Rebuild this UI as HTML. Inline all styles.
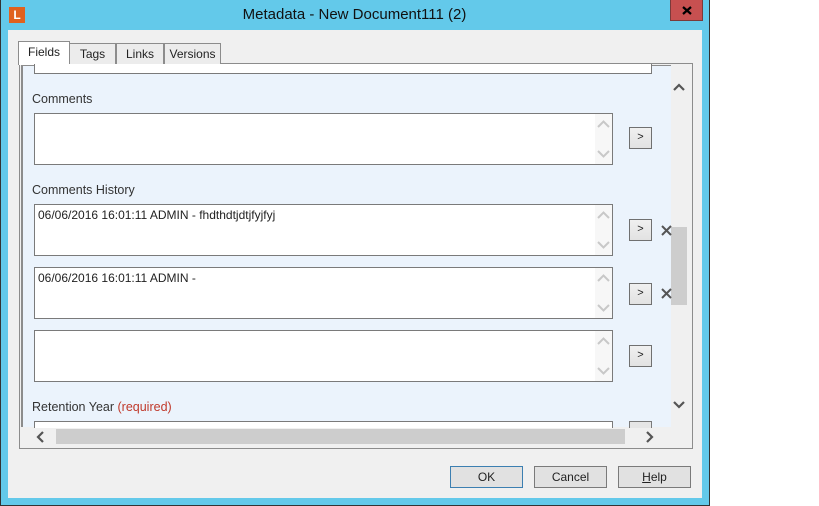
<!DOCTYPE html>
<html><head><style>
body{margin:0;width:819px;height:506px;background:#fff;font-family:"Liberation Sans",sans-serif;font-size:12px;color:#222;position:relative;overflow:hidden}
.a{position:absolute}
.win{left:0;top:0;width:708px;height:505px;background:#63c9ea;border:1px solid #333;border-top:none}
.ta{position:absolute;left:34px;width:577px;height:50px;background:#fff;border:1px solid #7a7a7a}
.ta .sb{position:absolute;right:0;top:0;width:17px;height:50px;background:#f7f7f7}
.btn{position:absolute;left:629px;width:21px;height:20px;background:linear-gradient(#f0f0f0,#e2e2e2);border:1px solid #707070;font-size:11px;text-align:center;line-height:19px}
.x{position:absolute;left:661px}
.lbl{position:absolute;left:32px;font-size:12.5px;color:#333}
.tab{position:absolute;top:43px;height:20px;border:1px solid #8c8c8c;background:#ececec;font-size:12px;line-height:20px;text-align:center}
.db{position:absolute;top:466px;width:71px;height:20px;border:1px solid #7a7a7a;background:#e1e1e1;text-align:center;line-height:20px;font-size:12px}
</style></head><body>
<div class="a win"></div>
<div class="a" style="left:9px;top:7px;width:16px;height:16px;background:#e0611e;color:#fff;font-weight:bold;font-size:12px;text-align:center;line-height:16px">L</div>
<div class="a" style="left:0;width:709px;top:6px;text-align:center;font-size:15px;color:#111">Metadata - New Document111 (2)</div>
<div class="a" style="left:670px;top:0;width:33px;height:21px;background:#c75050;border:1px solid #7b3a3a;border-top:none;box-sizing:border-box">
<svg class="a" style="left:11px;top:6px" width="10" height="9"><path d="M1 1L9 8M9 1L1 8" stroke="#000" stroke-width="2.2"/></svg></div>
<div class="a" style="left:8px;top:30px;width:694px;height:468px;background:#f0f0f0"></div>
<div class="a" style="left:19px;top:63px;width:672px;height:384px;border:1px solid #8c8c8c;background:#f0f0f0"></div>
<div class="tab" style="left:69px;width:45px">Tags</div>
<div class="tab" style="left:116px;width:46px">Links</div>
<div class="tab" style="left:164px;width:55px">Versions</div>
<div class="tab" style="left:18px;top:41px;width:50px;height:23px;background:#fff;border-bottom:none;line-height:20px">Fields</div>
<div class="a" style="left:21px;top:65px;width:650px;height:362px;background:#ebf3fc;border-left:2px solid #8c8c8c;border-top:1px solid #8c8c8c;box-sizing:border-box"></div>
<div class="a" style="left:671px;top:65px;width:17px;height:362px;background:#f0f0f0"></div>
<div class="a" style="left:671px;top:227px;width:16px;height:78px;background:#cdcdcd"></div>
<svg class="a" style="left:672px;top:82px" width="14" height="10"><path d="M2 8L7 3L12 8" stroke="#555" stroke-width="2.2" fill="none"/></svg>
<svg class="a" style="left:672px;top:400px" width="14" height="10"><path d="M2 2L7 7L12 2" stroke="#555" stroke-width="2.2" fill="none"/></svg>
<div class="a" style="left:34px;top:64px;width:616px;height:9px;background:#fff;border:1px solid #7a7a7a;border-top:none"></div>
<div class="lbl" style="top:92px">Comments</div>
<div class="ta" style="top:113px"><div class="sb"><svg width="17" height="50"><path d="M3 13L8.5 7.5L14 13M3 37L8.5 42.5L14 37" stroke="#c8c8c8" stroke-width="2" fill="none"/></svg></div></div>
<div class="btn" style="top:127px">&gt;</div>
<div class="lbl" style="top:183px">Comments History</div>
<div class="ta" style="top:204px"><div class="a" style="left:3px;top:3px">06/06/2016 16:01:11 ADMIN - fhdthdtjdtjfyjfyj</div><div class="sb"><svg width="17" height="50"><path d="M3 13L8.5 7.5L14 13M3 37L8.5 42.5L14 37" stroke="#c8c8c8" stroke-width="2" fill="none"/></svg></div></div>
<div class="btn" style="top:219px">&gt;</div>
<svg class="x" style="top:225px" width="11" height="11"><path d="M1 1L10 10M10 1L1 10" stroke="#555" stroke-width="2"/></svg>
<div class="ta" style="top:267px"><div class="a" style="left:3px;top:3px">06/06/2016 16:01:11 ADMIN -</div><div class="sb"><svg width="17" height="50"><path d="M3 13L8.5 7.5L14 13M3 37L8.5 42.5L14 37" stroke="#c8c8c8" stroke-width="2" fill="none"/></svg></div></div>
<div class="btn" style="top:283px">&gt;</div>
<svg class="x" style="top:288px" width="11" height="11"><path d="M1 1L10 10M10 1L1 10" stroke="#555" stroke-width="2"/></svg>
<div class="ta" style="top:330px"><div class="sb"><svg width="17" height="50"><path d="M3 13L8.5 7.5L14 13M3 37L8.5 42.5L14 37" stroke="#c8c8c8" stroke-width="2" fill="none"/></svg></div></div>
<div class="btn" style="top:345px">&gt;</div>
<div class="lbl" style="top:400px">Retention Year <span style="color:#c0392b">(required)</span></div>
<div class="a" style="left:34px;top:421px;width:577px;height:8px;background:#fff;border:1px solid #7a7a7a;border-bottom:none"></div>
<div class="a" style="left:629px;top:421px;width:21px;height:8px;background:#e6e6e6;border:1px solid #7a7a7a;border-bottom:none"></div>
<div class="a" style="left:22px;top:428px;width:649px;height:17px;background:#f0f0f0"></div>
<div class="a" style="left:56px;top:429px;width:569px;height:15px;background:#cdcdcd"></div>
<svg class="a" style="left:36px;top:431px" width="10" height="12"><path d="M7 1L2 6L7 11" stroke="#555" stroke-width="2.2" fill="none"/></svg>
<svg class="a" style="left:644px;top:431px" width="10" height="12"><path d="M3 1L8 6L3 11" stroke="#555" stroke-width="2.2" fill="none"/></svg>
<div class="db" style="left:450px;border-color:#3c7fb1">OK</div>
<div class="db" style="left:534px">Cancel</div>
<div class="db" style="left:618px"><u>H</u>elp</div>
</body></html>
